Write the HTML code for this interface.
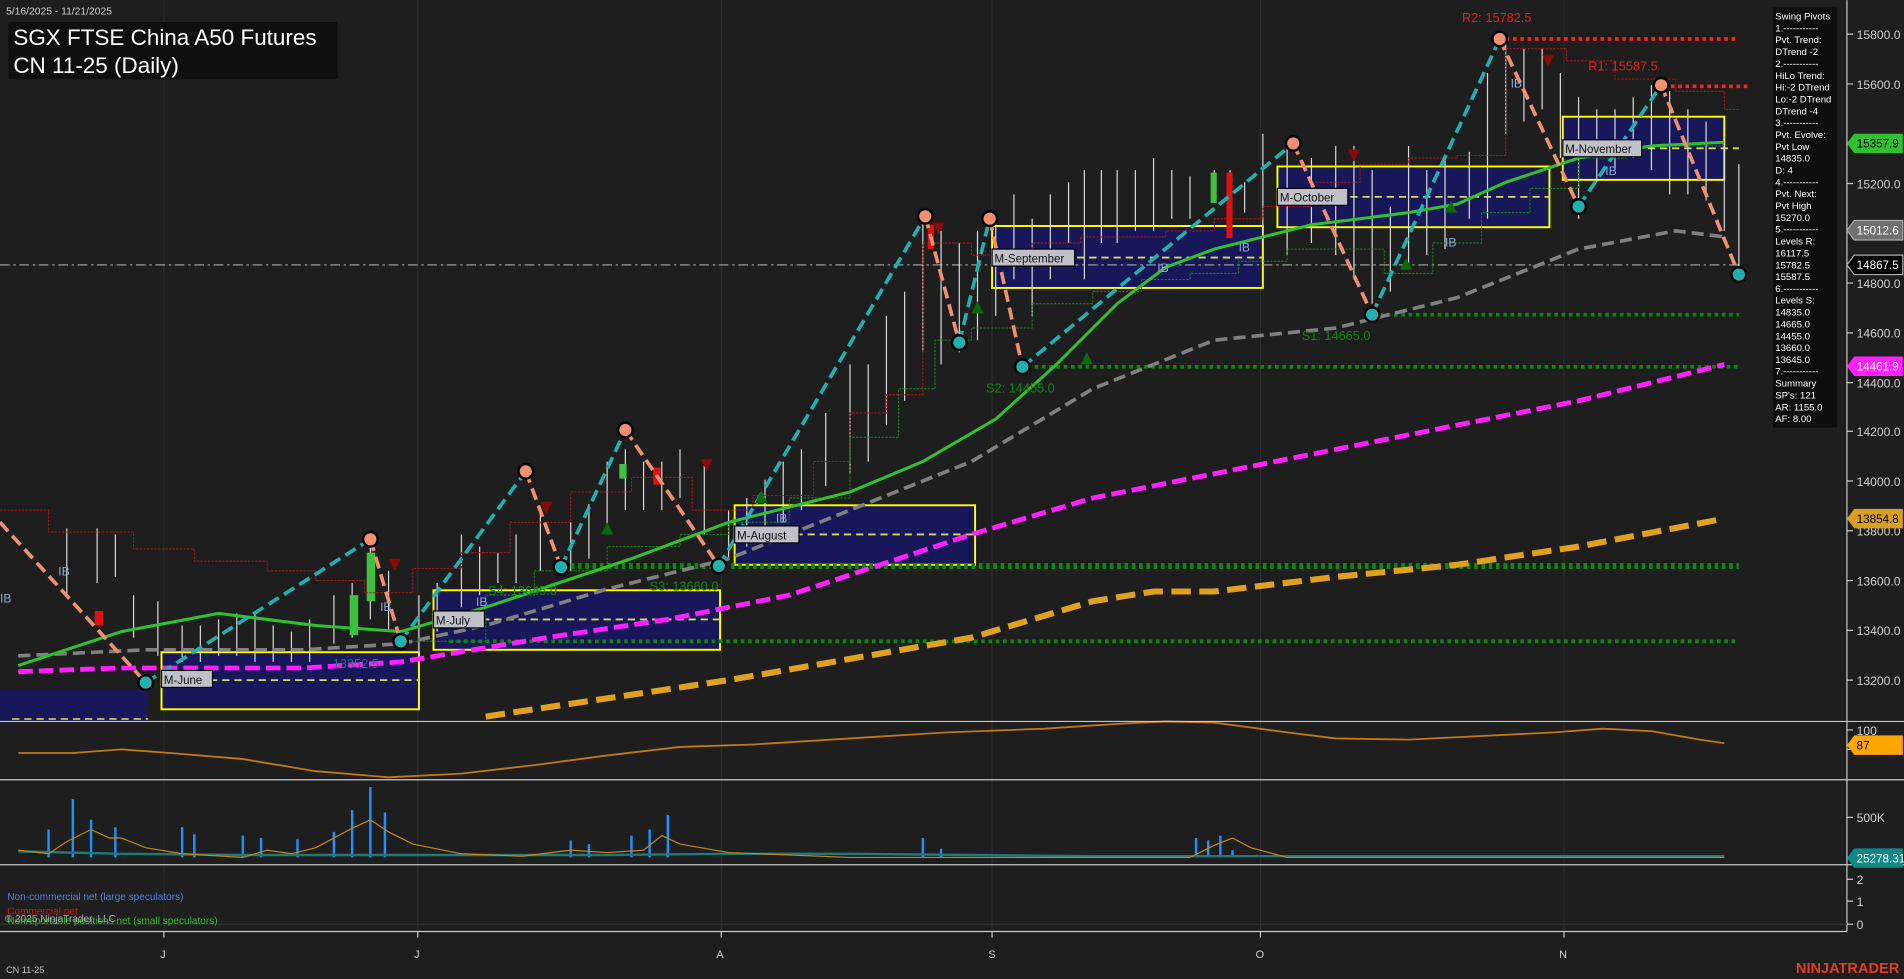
<!DOCTYPE html>
<html><head><meta charset="utf-8"><style>
html,body{margin:0;padding:0;background:#1e1e1e;overflow:hidden}
svg{display:block}
text{font-family:"Liberation Sans",Arial,sans-serif}
</style></head><body>
<svg width="1904" height="979" viewBox="0 0 1568 806" xmlns="http://www.w3.org/2000/svg">
<rect width="1568" height="806" fill="#1e1e1e"/>
<g stroke="#2c2c2c" stroke-width="1">
<line x1="135" y1="0" x2="135" y2="767"/><line x1="344" y1="0" x2="344" y2="767"/><line x1="594" y1="0" x2="594" y2="767"/><line x1="817" y1="0" x2="817" y2="767"/><line x1="1038" y1="0" x2="1038" y2="767"/><line x1="1288" y1="0" x2="1288" y2="767"/>
</g>
<g fill="#17175a">
<rect x="0" y="568" width="122" height="26"/>
</g>
<line x1="10" y1="592" x2="122" y2="592" stroke="#c8c850" stroke-width="1.5" stroke-dasharray="6,4"/>
<g fill="#17175a" stroke="#ffff00" stroke-width="1.6">
<rect x="133" y="537" width="212" height="47"/>
<rect x="357" y="486" width="236" height="49"/>
<rect x="605" y="416" width="198" height="49"/>
<rect x="817" y="186" width="223" height="51"/>
<rect x="1052" y="137" width="224" height="50"/>
<rect x="1287" y="96" width="133" height="52"/>
</g>
<g stroke="#d8d860" stroke-width="1.5" stroke-dasharray="6,4">
<line x1="133" y1="560" x2="345" y2="560"/><line x1="357" y1="510" x2="593" y2="510"/><line x1="605" y1="440" x2="803" y2="440"/><line x1="817" y1="212" x2="1040" y2="212"/><line x1="1052" y1="162" x2="1276" y2="162"/><line x1="1287" y1="122" x2="1432" y2="122"/>
</g>
<line x1="0" y1="218" x2="1432" y2="218" stroke="#9a9a9a" stroke-width="1" stroke-dasharray="8,3,2,3"/>
<g stroke="#d8d8d8" stroke-width="1">
<path d="M55 435V490M80 435V480M95 440V475M110 490V525M130 495V540M150 515V545M165 515V545M180 510V540M195 505V540M210 505V545M225 515V545M240 520V545M255 510V545M275 490V530M290 480V525M305 445V510M320 470V520M345 490V540M360 480V520M380 440V500M395 450V490M410 455V480M425 440V480M445 420V470M470 430V470M485 415V460M500 380V440M515 370V420M530 380V420M545 380V420M560 370V410M580 380V440M600 420V460M615 410V450M630 395V440M645 380V430M660 370V420M680 340V400M700 300V390M715 300V380M730 260V350M745 240V330M760 180V290M775 190V300M790 200V290M805 190V280M820 180V260M835 160V230M850 180V260M865 160V230M880 150V200M893 140V230M907 140V200M920 140V200M935 140V190M950 130V190M965 140V180M980 145V180M1000 140V165M1013 140V195M1025 150V175M1040 110V200M1060 120V210M1080 130V200M1100 120V210M1115 120V230M1130 140V250M1145 170V240M1160 120V220M1175 140V210M1190 130V205M1210 125V180M1225 60V180M1240 30V110M1255 40V100M1270 40V90M1285 60V130M1300 80V180M1315 90V150M1330 90V140M1345 80V130M1360 70V140M1375 75V160M1390 90V160M1405 100V165M1420 120V190M1432 135V230"/>
</g>
<g>
<rect x="78" y="503" width="7" height="12" fill="#e01010"/><rect x="288" y="490" width="7" height="33" fill="#40c040"/><rect x="302" y="455" width="7" height="40" fill="#40c040"/>
<rect x="510" y="382" width="6" height="12" fill="#40c040"/><rect x="538" y="385" width="6" height="14" fill="#e01010"/>
<rect x="997" y="142" width="5" height="25" fill="#40c040"/><rect x="1010" y="142" width="5" height="54" fill="#e01010"/><rect x="764" y="185" width="5" height="20" fill="#e01010"/>
</g>
<path d="M0 420H40V438H110V452H160V462H220V470H260V478H300V488H340V468H380V455H420V430H470V405H520V393H570V420H620V408H670V380H700V340H730V325H760V200H800V210H850V200H890V195H960V190H1000V180H1040V170H1080V150H1120V135H1160V130H1200V128H1240V40H1290V50H1330V65H1380V75H1420V90H1432" fill="none" stroke="#b01818" stroke-width="0.8" stroke-dasharray="2,1"/>
<path d="M330 528H400V490H440V470H500V450H560V440H600V430H650V410H700V360H740V320H770V280H800V270H850V250H900V240H940V230H980V225H1020V215H1060V205H1100V205H1140V225H1180V200H1220V175H1260V155H1300V130H1340V120H1420" fill="none" stroke="#1a8a1a" stroke-width="0.8" stroke-dasharray="2,1"/>
<g fill="none" stroke-dasharray="3,3">
<line x1="1240" y1="32" x2="1430" y2="32" stroke="#ff2020" stroke-width="3"/>
<line x1="1370" y1="71" x2="1440" y2="71" stroke="#ff2020" stroke-width="3"/>
<line x1="1130" y1="259" x2="1432" y2="259" stroke="#0a8a0a" stroke-width="3"/>
<line x1="840" y1="302" x2="1432" y2="302" stroke="#0a8a0a" stroke-width="3"/>
<line x1="470" y1="466" x2="1432" y2="466" stroke="#0a8a0a" stroke-width="5"/>
<line x1="370" y1="528" x2="1432" y2="528" stroke="#0a8a0a" stroke-width="3"/>
</g>
<path d="M400 590L600 560L800 525L900 495L950 487L1000 487L1100 475L1200 465L1300 450L1420 427" fill="none" stroke="#e0a020" stroke-width="5" stroke-dasharray="16,7"/>
<path d="M15 553L100 550L250 550L330 545L450 525L550 510L650 490L800 440L900 410L1000 390L1100 370L1200 350L1300 330L1420 300" fill="none" stroke="#ff20ff" stroke-width="4" stroke-dasharray="12,5"/>
<path d="M15 540L120 535L250 535L330 530L400 515L500 485L600 460L700 420L800 380L900 320L1000 280L1100 270L1200 245L1300 205L1380 190L1420 195" fill="none" stroke="#808080" stroke-width="3" stroke-dasharray="10,5"/>
<path d="M15 548L100 520L180 505L260 515L330 520L400 500L460 480L520 460L600 430L700 405L760 380L820 345L870 300L920 250L960 220L1000 205L1040 195L1080 185L1120 180L1160 175L1200 168L1240 150L1300 130L1360 120L1420 117" fill="none" stroke="#30c030" stroke-width="2.5"/>
<g fill="none" stroke-width="3" stroke-dasharray="10,5">
<path d="M120 562L305 444M330 528L433 388M462 467L515 354M592 466L762 178M790 282L815 180M842 302L1065 118M1130 259L1235 32M1300 170L1368 70" stroke="#20b0b0"/>
<path d="M0 430L120 562M305 444L330 528M433 388L462 467M515 354L592 466M762 178L790 282M815 180L842 302M1065 118L1130 259M1235 32L1300 170M1368 70L1432 226" stroke="#f09070"/>
</g>
<g stroke="#000" stroke-width="2">
<g fill="#f09070"><circle cx="305" cy="444" r="6"/><circle cx="433" cy="388" r="6"/><circle cx="515" cy="354" r="6"/><circle cx="762" cy="178" r="6"/><circle cx="815" cy="180" r="6"/><circle cx="1065" cy="118" r="6"/><circle cx="1235" cy="32" r="6"/><circle cx="1368" cy="70" r="6"/></g>
<g fill="#20b0b0"><circle cx="120" cy="562" r="6"/><circle cx="330" cy="528" r="6"/><circle cx="462" cy="467" r="6"/><circle cx="592" cy="466" r="6"/><circle cx="790" cy="282" r="6"/><circle cx="842" cy="302" r="6"/><circle cx="1130" cy="259" r="6"/><circle cx="1300" cy="170" r="6"/><circle cx="1432" cy="226" r="6"/></g>
</g>
<g fill="#0a6a0a"><path d="M495 440l5 -10l5 10zM800 258l5 -10l5 10zM890 300l5 -10l5 10zM1153 222l5 -10l5 10zM1190 175l5 -10l5 10zM622 414l5 -10l5 10z"/></g>
<g fill="#8a0a0a"><path d="M445 413l5 10l5 -10zM320 460l5 10l5 -10zM768 183l5 10l5 -10zM1110 123l5 10l5 -10zM1270 45l5 10l5 -10zM577 378l5 10l5 -10z"/></g>
<g fill="#8fa8d8" font-size="10">
<text x="48" y="474">IB</text><text x="0" y="496">IB</text><text x="313" y="503">IB</text><text x="392" y="499">IB</text><text x="639" y="430">IB</text><text x="1020" y="207">IB</text><text x="1190" y="203">IB</text><text x="1322" y="144">IB</text><text x="1244" y="72">IB</text><text x="953" y="224">IB</text>
</g>
<g font-family="Liberation Mono,monospace" font-size="9.5" fill="#111">
<rect x="133" y="552" width="42" height="14" fill="#c0c0c8" stroke="#000"/><text x="135" y="563">M-June</text>
<rect x="357" y="503" width="42" height="14" fill="#c0c0c8" stroke="#000"/><text x="359" y="514">M-July</text>
<rect x="605" y="433" width="53" height="14" fill="#c0c0c8" stroke="#000"/><text x="607" y="444">M-August</text>
<rect x="817" y="205" width="68" height="14" fill="#c0c0c8" stroke="#000"/><text x="819" y="216">M-September</text>
<rect x="1052" y="155" width="58" height="14" fill="#c0c0c8" stroke="#000"/><text x="1054" y="166">M-October</text>
<rect x="1287" y="115" width="65" height="14" fill="#c0c0c8" stroke="#000"/><text x="1289" y="126">M-November</text>
</g>
<g font-size="10.5">
<text x="1204" y="18" fill="#e02020">R2: 15782.5</text>
<text x="1308" y="58" fill="#e02020">R1: 15587.5</text>
<text x="1072" y="280" fill="#0a8a0a">S1: 14665.0</text>
<text x="812" y="323" fill="#0a8a0a">S2: 14455.0</text>
<text x="535" y="486" fill="#0a8a0a">S3: 13660.0</text>
<text x="402" y="490" fill="#0a8a0a">S4: 13645.0</text>
<text x="274" y="550" fill="#2a6a8a">13352.5</text>
</g>
<text x="5" y="12" fill="#d0d0d0" font-size="8.5">5/16/2025 - 11/21/2025</text>
<rect x="7" y="18" width="271" height="47" fill="#0f0f0f"/>
<text x="11" y="37" fill="#fff" font-size="18.5">SGX FTSE China A50 Futures</text>
<text x="11" y="60" fill="#fff" font-size="18.5">CN 11-25 (Daily)</text>
<rect x="1460" y="6" width="53" height="346" fill="#0e0e0e"/>
<g fill="#fff" font-size="7.9">
<text x="1462" y="16">Swing Pivots</text><text x="1462" y="25.8">1.-----------</text><text x="1462" y="35.5">Pvt. Trend:</text><text x="1462" y="45.3">DTrend -2</text><text x="1462" y="55">2.-----------</text><text x="1462" y="64.8">HiLo Trend:</text><text x="1462" y="74.5">Hi:-2 DTrend</text><text x="1462" y="84.3">Lo:-2 DTrend</text><text x="1462" y="94">DTrend -4</text><text x="1462" y="103.8">3.-----------</text><text x="1462" y="113.5">Pvt. Evolve:</text><text x="1462" y="123.3">Pvt Low</text><text x="1462" y="133">14835.0</text><text x="1462" y="142.8">D: 4</text><text x="1462" y="152.5">4.-----------</text><text x="1462" y="162.3">Pvt. Next:</text><text x="1462" y="172">Pvt High</text><text x="1462" y="181.8">15270.0</text><text x="1462" y="191.5">5.-----------</text><text x="1462" y="201.3">Levels R:</text><text x="1462" y="211">16117.5</text><text x="1462" y="220.8">15782.5</text><text x="1462" y="230.5">15587.5</text><text x="1462" y="240.3">6.-----------</text><text x="1462" y="250">Levels S:</text><text x="1462" y="259.8">14835.0</text><text x="1462" y="269.5">14665.0</text><text x="1462" y="279.3">14455.0</text><text x="1462" y="289">13660.0</text><text x="1462" y="298.8">13645.0</text><text x="1462" y="308.5">7.-----------</text><text x="1462" y="318.3">Summary</text><text x="1462" y="328">SP's: 121</text><text x="1462" y="337.8">AR: 1155.0</text><text x="1462" y="347.5">AF: 8.00</text>
</g>
<path d="M15 620L60 620L100 617L140 620L200 625L260 635L320 640L380 637L440 630L500 622L560 615L620 613L700 608L780 603L860 600L920 596L960 594L1000 595L1060 603L1100 608L1160 609L1220 606L1280 603L1320 600L1360 602L1400 609L1420 612" fill="none" stroke="#c07818" stroke-width="1.5"/>
<g stroke="#2090ff" stroke-width="2">
<path d="M40 706V683M60 706V658M75 706V675M95 706V681M150 706V681M160 706V687M200 706V688M215 706V690M245 706V691M275 706V685M290 706V667M305 706V648M317 706V669M470 706V692M485 706V695M520 706V688M535 706V683M550 706V671M760 706V690M775 706V699M985 706V690M995 706V692M1005 706V688M1015 706V700"/>
</g>
<path d="M15 701L100 703L200 704L300 704L400 704L500 704L600 703L700 703L800 704L900 705L1000 705L1100 705L1200 705L1300 705L1420 705" fill="none" stroke="#207878" stroke-width="2"/>
<path d="M15 700L40 703L55 693L75 683L90 690L100 690L120 698L150 703L200 706L220 700L240 703L260 698L290 682L305 675L320 685L340 695L380 703L430 705L470 700L500 702L530 700L545 688L560 695L600 702L700 706L800 706L900 706L980 706L1000 696L1015 690L1030 698L1060 706L1420 706" fill="none" stroke="#c08820" stroke-width="1"/>
<g stroke="#c8c8c8" stroke-width="1">
<line x1="0" y1="594" x2="1568" y2="594"/><line x1="0" y1="642" x2="1568" y2="642"/><line x1="0" y1="712" x2="1568" y2="712"/><line x1="0" y1="767" x2="1521" y2="767"/>
<line x1="1521" y1="0" x2="1521" y2="767"/>
</g>
<line x1="0" y1="761" x2="1521" y2="761" stroke="#333"/>
<g fill="#d0d0d0" font-size="10">
<text x="1529" y="32">15800.0</text><text x="1529" y="73">15600.0</text><text x="1529" y="155">15200.0</text><text x="1529" y="237">14800.0</text><text x="1529" y="278">14600.0</text><text x="1529" y="319">14400.0</text><text x="1529" y="359">14200.0</text><text x="1529" y="400">14000.0</text><text x="1529" y="441">13800.0</text><text x="1529" y="482">13600.0</text><text x="1529" y="523">13400.0</text><text x="1529" y="564">13200.0</text>
<text x="1529" y="605">100</text><text x="1529" y="677">500K</text><text x="1529" y="728">2</text><text x="1529" y="746">1</text><text x="1529" y="765">0</text>
</g>
<g stroke="#c8c8c8"><path d="M1521 28h5M1521 69h5M1521 151h5M1521 233h5M1521 274h5M1521 315h5M1521 355h5M1521 396h5M1521 437h5M1521 478h5M1521 519h5M1521 560h5M1521 601h5M1521 617h5M1521 673h5M1521 724h5M1521 742h5M1521 761h5"/></g>
<g font-size="9.6">
<path d="M1521 118l6 -8h40v16h-40z" fill="#30c030"/><text x="1529" y="121.5" fill="#000">15357.9</text>
<path d="M1521 189.5l6 -8h40v16h-40z" fill="#707070" stroke="#aaa"/><text x="1529" y="193" fill="#fff">15012.6</text>
<path d="M1521 218l6 -8h40v16h-40z" fill="#000" stroke="#aaa"/><text x="1529" y="221.5" fill="#fff">14867.5</text>
<path d="M1521 301.5l6 -8h40v16h-40z" fill="#ff20ff"/><text x="1529" y="305" fill="#fff">14461.9</text>
<path d="M1521 427l6 -8h40v16h-40z" fill="#d8a020"/><text x="1529" y="430.5" fill="#000">13854.8</text>
<path d="M1521 613.5l6 -8h40v16h-40z" fill="#ffa500"/><text x="1529" y="617" fill="#000">87</text>
<path d="M1521 706.5l6 -8h40v16h-40z" fill="#108888"/><text x="1529" y="710" fill="#fff">25278.31</text>
</g>
<g font-size="8.3">
<text x="6" y="741" fill="#5080e0">Non-commercial net (large speculators)</text>
<text x="6" y="753" fill="#e01010">Commercial net</text>
<text x="6" y="761" fill="#30c030">Nonreportable positions net (small speculators)</text>
<text x="4" y="759" fill="#b0b0b0">© 2025 NinjaTrader, LLC</text>
</g>
<g fill="#d0d0d0" font-size="9"><text x="132" y="789">J</text><text x="341" y="789">J</text><text x="590" y="789">A</text><text x="814" y="789">S</text><text x="1034" y="789">O</text><text x="1284" y="789">N</text></g>
<g stroke="#c8c8c8"><path d="M135 767v5M344 767v5M594 767v5M817 767v5M1038 767v5M1288 767v5"/></g>
<text x="5" y="801" fill="#c0c0c0" font-size="7.5">CN 11-25</text>
<text x="1479" y="801" fill="#e04020" font-size="12" font-weight="bold">NINJATRADER</text>
</svg>
</body></html>
